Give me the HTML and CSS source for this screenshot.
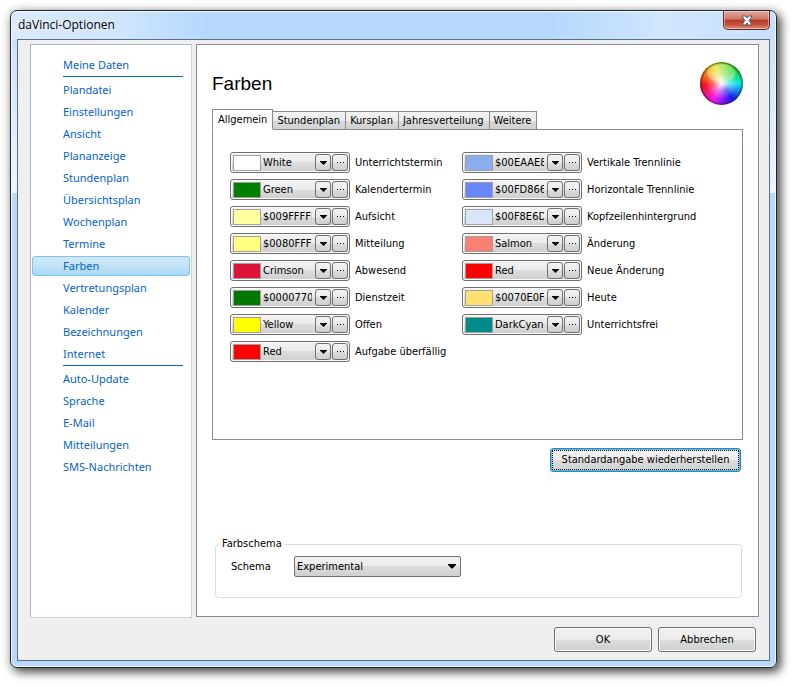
FILE: index.html
```
<!DOCTYPE html>
<html lang="de">
<head>
<meta charset="utf-8">
<title>daVinci-Optionen</title>
<link rel="stylesheet" href="styles.css">
</head>
<body>
<div class="window">
  <header class="titlebar">
    <h1>daVinci-Optionen</h1>
    <button class="close" type="button" aria-label="Schließen">
      <svg width="12" height="11" viewBox="0 0 12 11"><path d="M1 1h3.500L6 3 7.500 1H11L8.200 5.500 11 10H7.500L6 8 4.500 10H1l2.800-4.500z" fill="#fff" stroke="#50566a" stroke-width="1"/></svg>
    </button>
  </header>
  <div class="client">
    <div class="columns">
      <nav class="sidebar">
        <a href="#">Meine Daten</a>
        <hr>
        <a href="#">Plandatei</a>
        <a href="#">Einstellungen</a>
        <a href="#">Ansicht</a>
        <a href="#">Plananzeige</a>
        <a href="#">Stundenplan</a>
        <a href="#">Übersichtsplan</a>
        <a href="#">Wochenplan</a>
        <a href="#">Termine</a>
        <a href="#" class="current">Farben</a>
        <a href="#">Vertretungsplan</a>
        <a href="#">Kalender</a>
        <a href="#">Bezeichnungen</a>
        <a href="#">Internet</a>
        <hr>
        <a href="#">Auto-Update</a>
        <a href="#">Sprache</a>
        <a href="#">E-Mail</a>
        <a href="#">Mitteilungen</a>
        <a href="#">SMS-Nachrichten</a>
      </nav>
      <main class="page">
        <div class="page-head">
          <h2>Farben</h2>
          <div class="wheel"></div>
        </div>
        <div class="tabs" role="tablist">
          <button type="button" role="tab" class="tab selected" aria-selected="true">Allgemein</button>
          <button type="button" role="tab" class="tab">Stundenplan</button>
          <button type="button" role="tab" class="tab">Kursplan</button>
          <button type="button" role="tab" class="tab">Jahresverteilung</button>
          <button type="button" role="tab" class="tab">Weitere</button>
        </div>
        <div class="panel" role="tabpanel" id="panel">
          <div class="colors" id="left"></div>
          <div class="colors" id="right"></div>
        </div>
        <button type="button" class="btn restore">Standardangabe wiederherstellen</button>
        <fieldset class="scheme">
          <legend>Farbschema</legend>
          <label for="schema">Schema</label>
          <span class="select">
            <select id="schema"><option>Experimental</option></select>
            <svg width="8" height="5" viewBox="0 0 8 5"><path d="M0 0h8v1L4.500 4.500h-1L0 1z"/></svg>
          </span>
        </fieldset>
      </main>
    </div>
    <footer class="actions">
      <button type="button" class="btn">OK</button>
      <button type="button" class="btn">Abbrechen</button>
    </footer>
  </div>
</div>
<script src="colors.js"></script>
</body>
</html>
```
FILE: colors.js
```
const columns = {
  left: [
    ["Unterrichtstermin", "White", "#ffffff"],
    ["Kalendertermin", "Green", "#008000"],
    ["Aufsicht", "$009FFFFF", "#ffff9f"],
    ["Mitteilung", "$0080FFFF", "#ffff80"],
    ["Abwesend", "Crimson", "#dc143c"],
    ["Dienstzeit", "$00007700", "#007700"],
    ["Offen", "Yellow", "#ffff00"],
    ["Aufgabe überfällig", "Red", "#ff0000"]
  ],
  right: [
    ["Vertikale Trennlinie", "$00EAAE8A", "#8aaeea"],
    ["Horizontale Trennlinie", "$00FD866A", "#6a86fd"],
    ["Kopfzeilenhintergrund", "$00F8E6D7", "#d7e6f8"],
    ["Änderung", "Salmon", "#fa8072"],
    ["Neue Änderung", "Red", "#ff0000"],
    ["Heute", "$0070E0FF", "#ffe070"],
    ["Unterrichtsfrei", "DarkCyan", "#008b8b"]
  ]
};

for (const [side, rows] of Object.entries(columns)) {
  document.getElementById(side).innerHTML = rows.map(([label, value, color], i) => `
    <div class="color-row">
      <div class="picker">
        <span class="swatch" style="background:${color}"></span>
        <input type="text" id="${side}${i}" value="${value}" readonly>
        <button type="button" aria-label="Farbe wählen"><svg width="7" height="4" viewBox="0 0 7 4"><path d="M0 0h7v.5L3.500 4 0 .5z"/></svg></button>
        <button type="button" aria-label="Weitere Farben"><svg width="7" height="4" viewBox="0 0 7 4"><path d="M0 1h1v1H0zM3 1h1v1H3zM6 1h1v1H6z"/></svg></button>
      </div>
      <label for="${side}${i}">${label}</label>
    </div>`).join("");
}
```
FILE: styles.css
```
* { box-sizing: border-box; }

body {
  margin: 0;
  padding: 10px 18px 18px 10px;
  min-height: 100vh;
  display: flex;
  background: #fff;
  color: #000;
  font: 11px/14px "DejaVu Sans Condensed", Tahoma, sans-serif;
}

button, input, select { font: inherit; color: inherit; }

.window {
  flex: 1;
  display: flex;
  flex-direction: column;
  padding: 0 6px 6px;
  border: 1px solid #1d2430;
  border-radius: 7px;
  background:
    linear-gradient(90deg, #dbeafb 0, #cfe5fc 110px, #b5d8fc 200px, #b5d8fc 70%, #d0e6fd 85%, #c8e1fb 100%) 0 0 / 100% 29px no-repeat,
    linear-gradient(#c4def8, #eef6fe 182px, #b9d9fb 182px);
  box-shadow: inset 0 0 0 1px #f0f8ff, 4px 4px 10px rgba(0, 0, 0, .6), 1px 2px 12px rgba(0, 0, 0, .3);
}

.titlebar {
  display: flex;
  justify-content: space-between;
  align-items: flex-start;
  height: 28px;
  padding-left: 1px;
}

.titlebar h1 {
  margin: 0;
  font: 12px/27px "Open Sans", sans-serif;
  text-shadow: 0 0 6px #fff;
}

.close {
  display: grid;
  place-items: center;
  width: 47px;
  height: 19px;
  padding: 0;
  border: 1px solid #5b2a2e;
  border-top: 0;
  border-radius: 0 0 5px 5px;
  background: linear-gradient(#e3a79b, #cf7768 45%, #b43a26 50%, #c4503a 75%, #dd8f78);
  box-shadow: inset 0 0 0 1px rgba(255, 255, 255, .4);
}

.client {
  flex: 1;
  display: flex;
  flex-direction: column;
  border: 1px solid #5a6f85;
  background: #efefef;
}

.columns {
  flex: 1;
  display: flex;
  gap: 4px;
  padding: 4px 10px 0 12px;
}

.sidebar {
  width: 162px;
  padding: 9px 1px;
  border: 1px solid #c8d6e2;
  border-left-color: #a6b8c8;
  border-top-color: #a6b8c8;
  background: #fff;
  font: 11px/18px "Noto Sans", sans-serif;
}

.sidebar a {
  display: block;
  height: 20px;
  margin: 1px 0 2px;
  padding-left: 30px;
  border: 1px solid transparent;
  border-radius: 3px;
  color: #0563c9;
  text-decoration: none;
}

.sidebar a + a { margin-top: 0; }

.sidebar .current {
  border-color: #7cc4ea;
  background: linear-gradient(#cfe7f3, #c3e2f5 50%, #a5d8f8);
}

.sidebar hr {
  height: 1px;
  margin: -1px 7px 3px 31px;
  border: 0;
  background: #0563c9;
}

.page {
  flex: 1;
  display: flex;
  flex-direction: column;
  margin-bottom: 1px;
  padding: 17px 15px 18px;
  border: 1px solid #868a96;
  background: #fff;
}

.page-head {
  display: flex;
  justify-content: space-between;
  align-items: center;
  height: 43px;
}

.page-head h2 {
  margin: 0;
  font: 19px/22px "Liberation Sans", Arial, sans-serif;
}

.wheel {
  width: 43px;
  height: 43px;
  border-radius: 50%;
  background:
    radial-gradient(ellipse 15px 10px at 50% 26%, rgba(255, 255, 255, .35) 85%, transparent),
    radial-gradient(circle closest-side, #fff 0, rgba(255, 255, 255, .4) 35%, transparent 75%),
    radial-gradient(circle closest-side, transparent 86%, rgba(0, 0, 0, .5)),
    conic-gradient(#a4d820, #18d818 40deg, #10e8e8 90deg, #1818f0 145deg, #f018f0 205deg, #f81020 265deg, #f8a010 310deg, #e0e010 340deg, #a4d820);
}

.tabs {
  position: relative;
  display: flex;
  align-items: flex-end;
  height: 21px;
  margin: 4px 0 -1px;
}

.tab {
  height: 19px;
  padding: 0 5px 0 4px;
  border: 1px solid #868a96;
  border-left-width: 0;
  background: linear-gradient(#f3f3f3, #ebebeb 50%, #dadada 50%, #d0d0d0);
  line-height: 17px;
}

.tab.selected {
  height: 21px;
  padding: 0 5px;
  border-left-width: 1px;
  border-bottom-color: #fff;
  background: #fff;
}

.panel {
  display: flex;
  gap: 24px;
  min-height: 311px;
  padding: 22px 17px;
  border: 1px solid #868a96;
}

.colors {
  display: flex;
  flex-direction: column;
  gap: 6px;
}

.colors:first-child { width: 208px; }

.color-row {
  display: flex;
  align-items: center;
  gap: 5px;
  white-space: nowrap;
}

.picker {
  display: flex;
  align-items: center;
  gap: 1px;
  width: 120px;
  height: 21px;
  padding: 0 1px 0 2px;
  border: 1px solid #707070;
  border-radius: 3px;
  background: linear-gradient(#f2f2f2, #ebebeb 50%, #dddddd 50%, #cfcfcf);
  box-shadow: inset 0 0 0 1px #fafafa;
}

.swatch {
  flex: none;
  width: 28px;
  height: 16px;
  border: 1px solid #a0a0a0;
}

.picker input {
  flex: 1;
  min-width: 0;
  height: 16px;
  margin-right: 2px;
  padding: 0 0 0 1px;
  border: 0;
  background: none;
}

.picker button {
  flex: none;
  display: grid;
  place-items: center;
  width: 16px;
  height: 17px;
  padding: 0;
  border: 1px solid #707070;
  border-radius: 3px;
  background: linear-gradient(#f2f2f2, #ebebeb 50%, #dddddd 50%, #cfcfcf);
}

.btn {
  height: 25px;
  min-width: 98px;
  padding: 0 12px;
  border: 1px solid #707070;
  border-radius: 3px;
  background: linear-gradient(#f2f2f2, #ebebeb 50%, #dddddd 50%, #cfcfcf);
  box-shadow: inset 0 0 0 1px #fcfcfc;
}

.restore {
  align-self: flex-end;
  height: 24px;
  min-width: 191px;
  margin: 8px 2px 0 0;
  padding: 0;
  border-color: #3c7fb1;
  box-shadow: inset 0 0 0 1px #48c8f0;
  outline: 1px dotted #000;
  outline-offset: -3px;
}

.scheme {
  display: flex;
  align-items: center;
  min-width: 0;
  height: 61px;
  margin: auto 1px 0 3px;
  padding: 5px 15px 0;
  border: 1px solid #d5dfe5;
  border-radius: 4px;
}

.scheme legend {
  margin-left: -12px;
  padding: 0 3px;
}

.scheme label { width: 63px; }

.select {
  position: relative;
  display: flex;
}

.select select {
  appearance: none;
  width: 167px;
  height: 21px;
  padding: 0 20px 0 2px;
  border: 1px solid #707070;
  border-radius: 2px;
  background: linear-gradient(#f2f2f2, #ebebeb 50%, #dddddd 50%, #cfcfcf);
}

.select svg {
  position: absolute;
  right: 5px;
  top: 8px;
  pointer-events: none;
}

.actions {
  display: flex;
  justify-content: flex-end;
  gap: 6px;
  padding: 9px 13px 8px;
}
```
